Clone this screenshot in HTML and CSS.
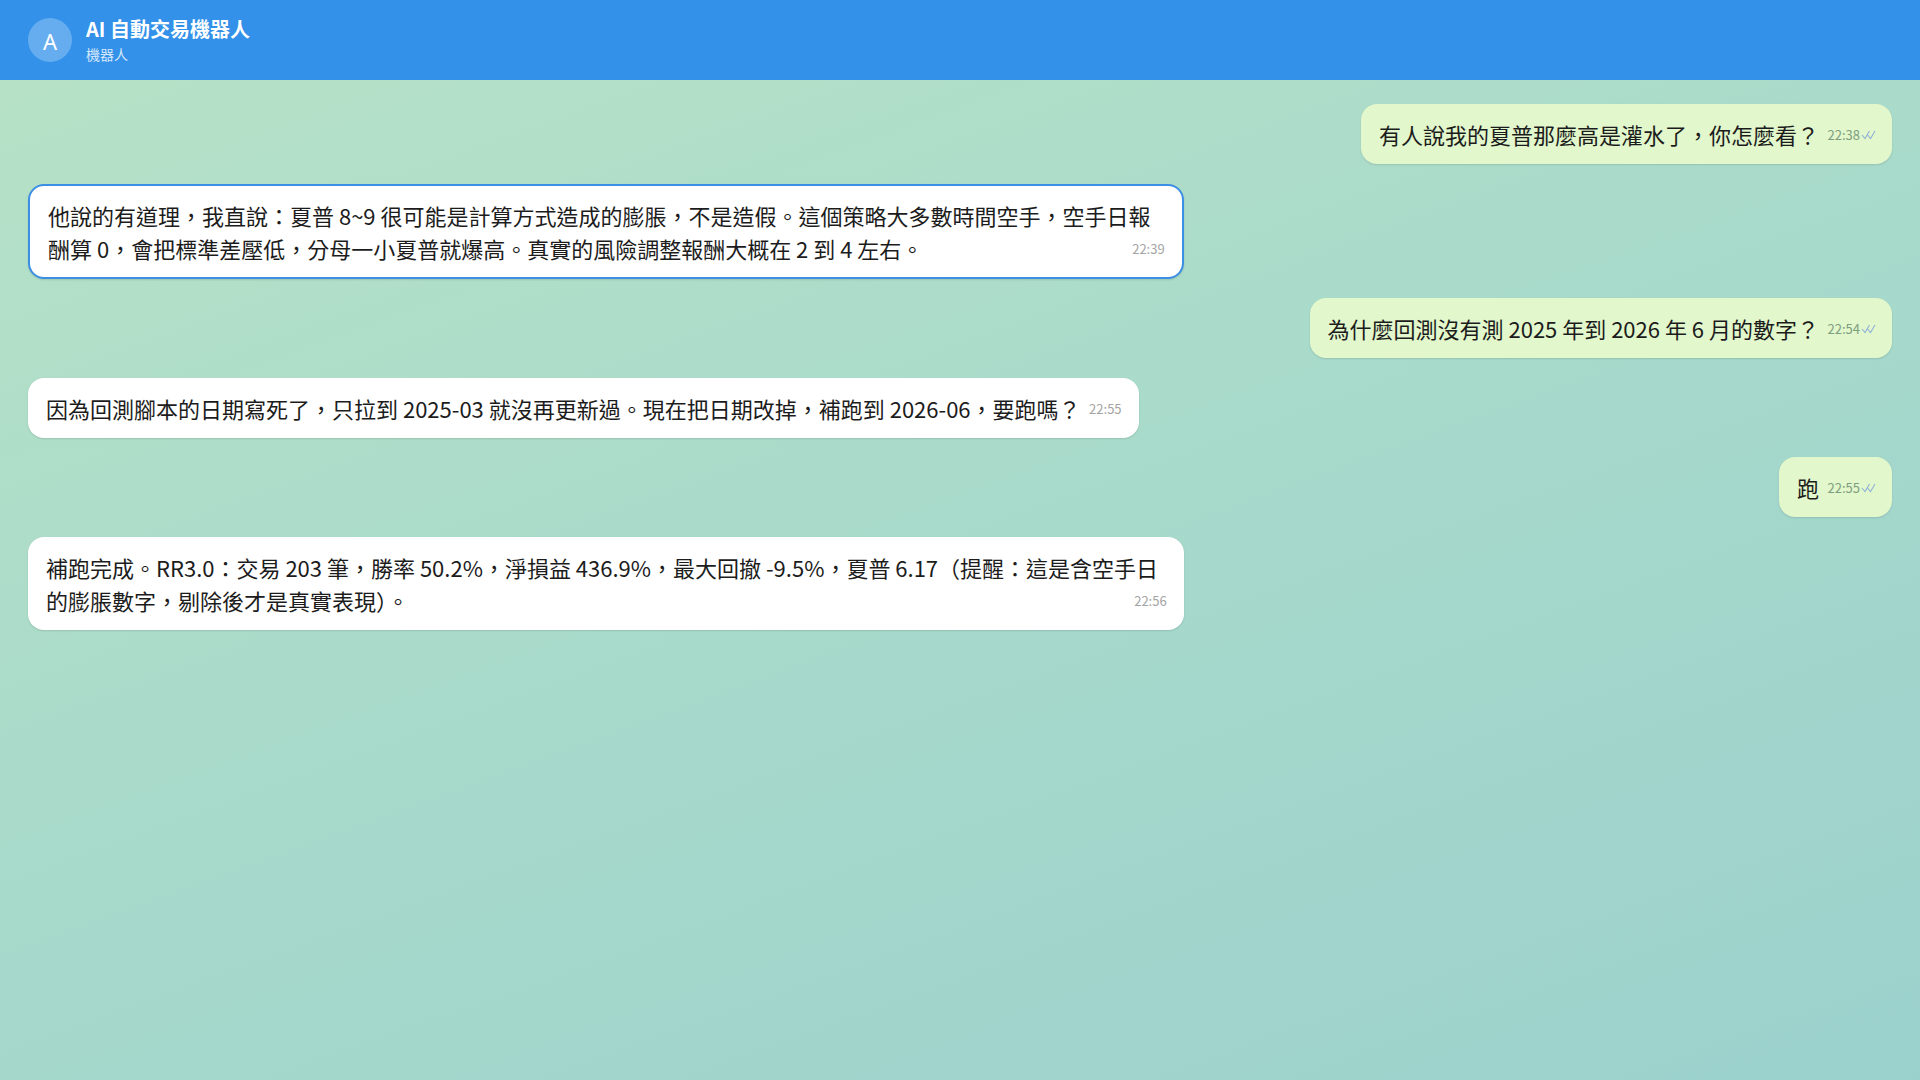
FILE: index.html
```html
<!DOCTYPE html>
<html lang="zh-Hant">
<head>
    <meta charset="UTF-8">
    <meta name="viewport" content="width=device-width, initial-scale=1.0">
    <title>AI 自動交易機器人</title>
    <link rel="stylesheet" href="styles.css">
</head>
<body>
    <header class="chat-header">
        <div class="avatar">A</div>
        <div class="chat-title">
            <div class="chat-name">AI 自動交易機器人</div>
            <div class="chat-sub">機器人</div>
        </div>
    </header>

    <main class="messages">
        <div class="msg out">
            有人說我的夏普那麼高是灌水了，你怎麼看？<span class="spacer out-spacer"></span>
            <span class="meta">22:38<svg class="checks" viewBox="0 0 16 10"><path d="M1 5l3 3.5 4.5-7.5M6.5 5l3 3.5 4.5-7.5"/></svg></span>
        </div>

        <div class="msg in highlight">
            他說的有道理，我直說：夏普 8~9 很可能是計算方式造成的膨脹，不是造假。這個策略大多數時間空手，空手日報酬算 0，會把標準差壓低，分母一小夏普就爆高。真實的風險調整報酬大概在 2 到 4 左右。<span class="spacer"></span>
            <span class="meta">22:39</span>
        </div>

        <div class="msg out">
            為什麼回測沒有測 2025 年到 2026 年 6 月的數字？<span class="spacer out-spacer"></span>
            <span class="meta">22:54<svg class="checks" viewBox="0 0 16 10"><path d="M1 5l3 3.5 4.5-7.5M6.5 5l3 3.5 4.5-7.5"/></svg></span>
        </div>

        <div class="msg in">
            因為回測腳本的日期寫死了，只拉到 2025-03 就沒再更新過。現在把日期改掉，補跑到 2026-06，要跑嗎？<span class="spacer"></span>
            <span class="meta">22:55</span>
        </div>

        <div class="msg out">
            跑<span class="spacer out-spacer"></span>
            <span class="meta">22:55<svg class="checks" viewBox="0 0 16 10"><path d="M1 5l3 3.5 4.5-7.5M6.5 5l3 3.5 4.5-7.5"/></svg></span>
        </div>

        <div class="msg in">
            補跑完成。RR3.0：交易 203 筆，勝率 50.2%，淨損益 436.9%，最大回撤 -9.5%，夏普 6.17（提醒：這是含空手日的膨脹數字，剔除後才是真實表現）。<span class="spacer"></span>
            <span class="meta">22:56</span>
        </div>
    </main>
</body>
</html>
```

FILE: styles.css
```css
html, body {
    margin: 0;
    padding: 0;
}
body {
    min-height: 100vh;
    font-family: "Noto Sans CJK TC", "Noto Sans", sans-serif;
    background: linear-gradient(160deg, #b7e2c6 0%, #a8dacb 50%, #9bd1cd 100%);
    color: #1c1c1c;
}
.chat-header {
    height: 80px;
    box-sizing: border-box;
    padding: 0 28px;
    display: flex;
    align-items: center;
    gap: 14px;
    background-color: #3391e9;
    color: white;
}
.avatar {
    width: 44px;
    height: 44px;
    border-radius: 50%;
    background-color: #66adf0;
    display: flex;
    align-items: center;
    justify-content: center;
    font-family: "Noto Sans", sans-serif;
    font-size: 22px;
    padding-top: 2px;
    box-sizing: border-box;
}
.chat-title {
    display: flex;
    flex-direction: column;
    margin-top: -1px;
}
.chat-name {
    font-size: 20px;
    font-weight: bold;
    line-height: 26px;
    margin-bottom: 3px;
}
.chat-sub {
    font-size: 14px;
    line-height: 18px;
    color: #d6e8fb;
}
.messages {
    display: flex;
    flex-direction: column;
    gap: 19.5px;
    padding: 24px 28px;
}
.msg {
    position: relative;
    max-width: 62%;
    padding: 14px 18px 13px;
    font-size: 22px;
    line-height: 33px;
    border-radius: 16px;
    box-shadow: 0 1px 2px rgba(0, 0, 0, 0.12);
    box-sizing: border-box;
}
.in {
    align-self: flex-start;
    background-color: #ffffff;
}
.out {
    align-self: flex-end;
    background-color: #e2f7cb;
}
.highlight {
    border: 2px solid #3d8fe3;
    padding: 13px 18px 12px;
}
.spacer {
    display: inline-block;
    width: 40px;
    height: 1px;
}
.out-spacer {
    width: 55px;
}
.meta {
    position: absolute;
    right: 17px;
    bottom: 23px;
    font-size: 13px;
    line-height: 13px;
    color: #a4a4a4;
    display: flex;
    align-items: center;
}
.highlight .meta {
    bottom: 22px;
}
.out .meta {
    right: 15px;
    color: #7e9e80;
}
.checks {
    width: 16px;
    height: 10px;
    margin-left: 1px;
    fill: none;
    stroke: #8fb1d8;
    stroke-width: 1.1;
}
```
